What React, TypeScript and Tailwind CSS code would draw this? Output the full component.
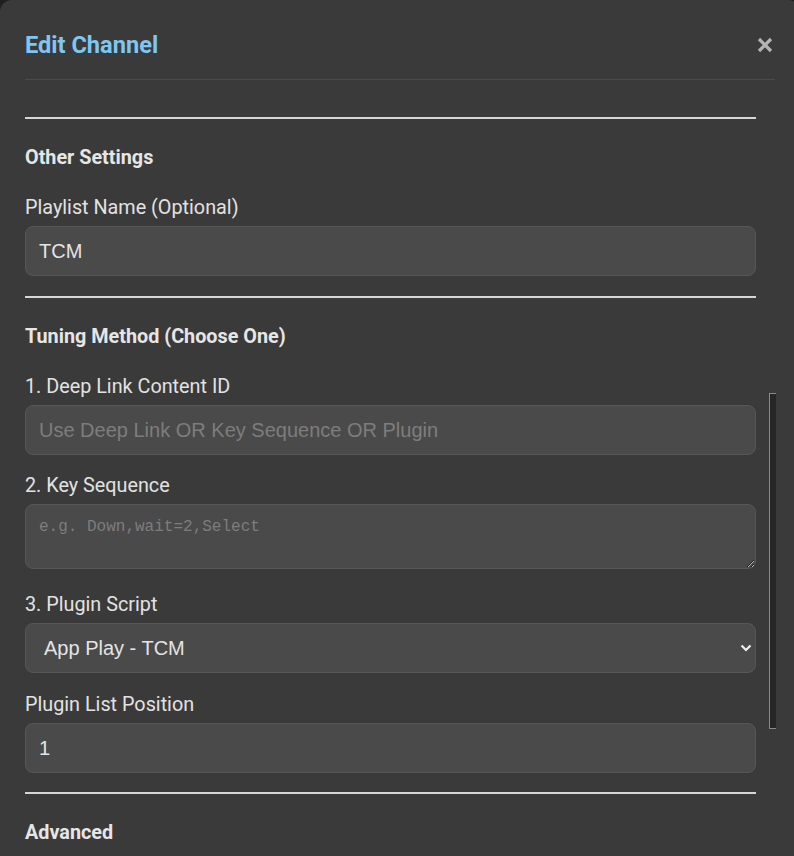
import React from 'react';

const labelCls = "block text-[19.8px] leading-[24px] text-[#e2e2e2] mb-[6px]";
const inputCls =
  "block w-full h-[50px] rounded-[8px] border border-[#575757] bg-[#4a4a4a] px-[13px] text-[20px] text-[#e4e4e4] placeholder:text-[#7d7d7d] outline-none font-['Liberation_Sans',Arial,sans-serif]";

const Divider = () => <div className="h-[2px] bg-[#d6d6d6]" />;

const SectionTitle = ({ children }: { children: React.ReactNode }) => (
  <h3 className="mt-[27px] mb-[26px] text-[19.8px] leading-[24px] font-bold text-[#e6e6e6]">{children}</h3>
);

const App = () => {
  return (
    <div className="w-[794px] h-[856px] overflow-hidden bg-[#1f1f1f] font-['Roboto',sans-serif]">
      <div className="relative w-[800px] h-[900px] rounded-[12px] bg-[#3a3a3a] px-[25px]">
        {/* header */}
        <div className="flex h-[80px] items-start justify-between border-b border-[#4b4b4b] pt-[31px]">
          <h2 className="text-[23.6px] leading-[28px] font-bold text-[#7fc7f0]">Edit Channel</h2>
          <button className="mt-[6px] mr-[2px] text-[#b4b4b4]" aria-label="Close">
            <svg width="16" height="16" viewBox="0 0 16 16">
              <path d="M2 2 L14 14 M14 2 L2 14" stroke="currentColor" strokeWidth="3.2" strokeLinecap="butt" />
            </svg>
          </button>
        </div>

        {/* body */}
        <div className="w-[731px] pt-[37px]">
          <Divider />
          <SectionTitle>Other Settings</SectionTitle>
          <label className={labelCls}>Playlist Name (Optional)</label>
          <input className={inputCls} defaultValue="TCM" />
          <div className="mt-[20px]">
            <Divider />
          </div>

          <SectionTitle>Tuning Method (Choose One)</SectionTitle>
          <label className={labelCls}>1. Deep Link Content ID</label>
          <input className={inputCls} placeholder="Use Deep Link OR Key Sequence OR Plugin" />

          <label className={`${labelCls} mt-[19px]`}>2. Key Sequence</label>
          <textarea
            className="block w-full h-[65px] rounded-[8px] border border-[#575757] bg-[#4a4a4a] px-[13px] py-[12px] text-[16px] leading-[20px] text-[#e4e4e4] placeholder:text-[#7d7d7d] outline-none font-['Liberation_Mono',monospace] [color-scheme:dark]"
            placeholder="e.g. Down,wait=2,Select"
          />

          <label className={`${labelCls} mt-[24px]`}>3. Plugin Script</label>
          <div className="relative">
            <select
              className={`${inputCls} appearance-none pl-[18px]`}
              defaultValue="tcm"
            >
              <option value="tcm">App Play - TCM</option>
            </select>
            <svg
              className="pointer-events-none absolute right-[4px] top-[20px] text-[#f0f0f0]"
              width="12"
              height="10"
              viewBox="0 0 12 10"
            >
              <path d="M1.5 2.5 L6 7 L10.5 2.5" fill="none" stroke="currentColor" strokeWidth="2.2" />
            </svg>
          </div>

          <label className={`${labelCls} mt-[20px]`}>Plugin List Position</label>
          <input className={inputCls} defaultValue="1" />
          <div className="mt-[19px]">
            <Divider />
          </div>

          <SectionTitle>Advanced</SectionTitle>
        </div>

        {/* scrollbar thumb */}
        <div className="absolute left-[769px] top-[393px] h-[336px] w-[7px] border-l border-t border-b border-[#8a8a8a] bg-[#262626]" />
      </div>
    </div>
  );
};

export default App;
